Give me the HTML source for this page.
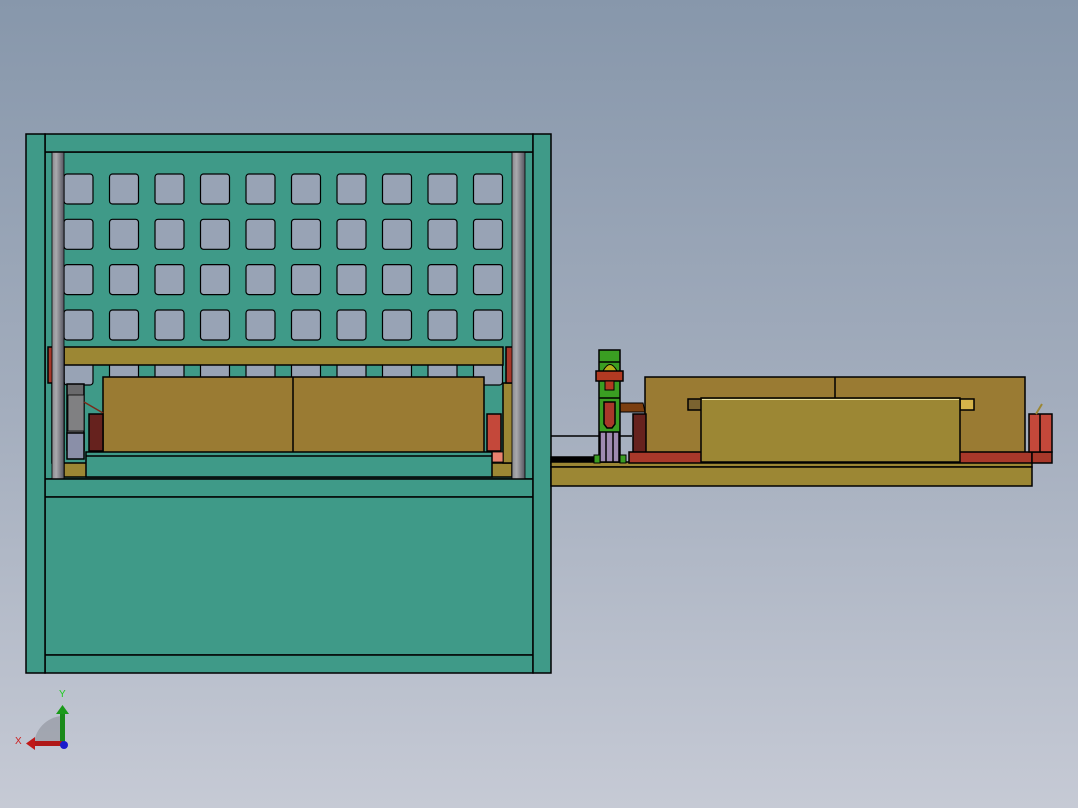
<!DOCTYPE html>
<html><head><style>html,body{margin:0;padding:0;}body{width:1078px;height:808px;overflow:hidden;}</style></head>
<body>
<svg width="1078" height="808" viewBox="0 0 1078 808" xmlns="http://www.w3.org/2000/svg" style="display:block">
<defs>
<linearGradient id="bg" x1="0" y1="0" x2="0" y2="1">
<stop offset="0" stop-color="#8797ab"/><stop offset="0.5" stop-color="#a3adbd"/><stop offset="1" stop-color="#c6cad5"/>
</linearGradient>
<linearGradient id="rod" x1="0" y1="0" x2="1" y2="0">
<stop offset="0" stop-color="#8a8a8e"/><stop offset="0.35" stop-color="#a9a9ad"/><stop offset="1" stop-color="#555560"/>
</linearGradient>
</defs>
<rect width="1078" height="808" fill="url(#bg)"/>
<g stroke="#000" stroke-width="1.5">
<rect x="45" y="152" width="488" height="327" fill="#3f9a88"/>
<g fill="#98a3b5" stroke-width="1.2">
<g id="row">
<rect x="64" y="174" width="29" height="30" rx="3"/><rect x="109.5" y="174" width="29" height="30" rx="3"/>
<rect x="155" y="174" width="29" height="30" rx="3"/><rect x="200.5" y="174" width="29" height="30" rx="3"/>
<rect x="246" y="174" width="29" height="30" rx="3"/><rect x="291.5" y="174" width="29" height="30" rx="3"/>
<rect x="337" y="174" width="29" height="30" rx="3"/><rect x="382.5" y="174" width="29" height="30" rx="3"/>
<rect x="428" y="174" width="29" height="30" rx="3"/><rect x="473.5" y="174" width="29" height="30" rx="3"/>
</g>
<use href="#row" y="45.3"/><use href="#row" y="90.6"/><use href="#row" y="136"/><use href="#row" y="181"/>
</g>
<rect x="64" y="463" width="448" height="14" fill="#9c8734"/>
<rect x="52" y="383" width="12" height="80" fill="#9c8734"/>
<rect x="503" y="383" width="10" height="80" fill="#9c8734"/>
<rect x="64" y="347" width="439" height="18" fill="#9c8734"/>
<rect x="48" y="347" width="16" height="36" fill="#a8382a"/>
<rect x="506" y="347" width="16" height="36" fill="#a8382a"/>
<rect x="103" y="377" width="381" height="76" fill="#9a7b33"/>
<line x1="293" y1="377" x2="293" y2="453"/>
<rect x="67" y="384" width="17" height="66" fill="#6a6a6c"/>
<rect x="68" y="395" width="16" height="36" fill="#808082" stroke-width="0.8"/>
<rect x="67" y="433" width="17" height="26" fill="#8a8fa8"/>
<line x1="84" y1="402" x2="103" y2="413" stroke="#7a2a1a" stroke-width="1.5"/>
<rect x="89" y="414" width="14" height="37" fill="#66221e"/>
<rect x="487" y="414" width="14" height="37" fill="#c4483a"/>
<rect x="492" y="452" width="11" height="10" fill="#e9826f" stroke-width="0.8"/>
<rect x="86" y="452" width="406" height="25" fill="#3f9a88"/>
<line x1="86" y1="456" x2="492" y2="456"/>
<rect x="52" y="152" width="12" height="327" fill="url(#rod)" stroke-width="0.8"/>
<rect x="512" y="152" width="13" height="327" fill="url(#rod)" stroke-width="0.8"/>
<rect x="45" y="134" width="488" height="18" fill="#3f9a88"/>
<rect x="45" y="479" width="488" height="18" fill="#3f9a88"/>
<rect x="45" y="497" width="488" height="158" fill="#3f9a88"/>
<rect x="45" y="655" width="488" height="18" fill="#3f9a88"/>
<rect x="26" y="134" width="19" height="539" fill="#3f9a88"/>
<rect x="533" y="134" width="18" height="539" fill="#3f9a88"/>
<line x1="551" y1="436" x2="632" y2="436"/>
<rect x="551" y="457" width="50" height="6" fill="#000"/>
<rect x="551" y="462" width="481" height="5" fill="#9c8734"/>
<rect x="551" y="467" width="481" height="19" fill="#9c8734"/>
<rect x="645" y="377" width="380" height="76" fill="#9a7b33"/>
<line x1="835" y1="377" x2="835" y2="400"/>
<rect x="633" y="414" width="13" height="39" fill="#66221e"/>
<path d="M620 403 H643 L645 412 H620 Z" fill="#7b3e10" stroke-width="1"/>
<rect x="629" y="452" width="403" height="11" fill="#a8382a"/>
<rect x="1032" y="452" width="20" height="11" fill="#a8382a"/>
<rect x="1029" y="414" width="23" height="38" fill="#c4483a"/>
<line x1="1040" y1="414" x2="1040" y2="452"/>
<line x1="1036" y1="414" x2="1042" y2="404" stroke="#9c8734" stroke-width="2"/>
<rect x="688" y="399" width="14" height="11" fill="#7a6330"/>
<rect x="960" y="399" width="14" height="11" fill="#d6b44a"/>
<rect x="701" y="398" width="259" height="64" fill="#9c8734"/>
<line x1="702" y1="399.5" x2="959" y2="399.5" stroke="#e8e0a0" stroke-width="1"/>
<rect x="599" y="350" width="21" height="112" fill="#3a9e22"/>
<line x1="599" y1="362" x2="620" y2="362"/>
<path d="M603 371 Q610 358 617 371 Z" fill="#b6b01a" stroke-width="1"/>
<rect x="596" y="371" width="27" height="10" fill="#b23a22"/>
<rect x="605" y="381" width="9" height="9" fill="#b23a22" stroke-width="1"/>
<line x1="599" y1="398" x2="620" y2="398"/>
<path d="M604 402 H615 V424 L612 428 H607 L604 424 Z" fill="#a8382a"/>
<rect x="600" y="432" width="19" height="30" fill="#9f8ab0"/>
<line x1="606" y1="432" x2="606" y2="462"/><line x1="613" y1="432" x2="613" y2="462"/>
<rect x="594" y="455" width="6" height="8" fill="#3a9e22" stroke-width="1"/>
<rect x="620" y="455" width="6" height="8" fill="#3a9e22" stroke-width="1"/>
</g>
<path d="M34 745 A30 30 0 0 1 62 716 L62 745 Z" fill="#9a9ea8" opacity="0.8"/>
<rect x="60" y="712" width="5" height="33" fill="#1a8a1a"/>
<path d="M56 714 L62.5 705 L69 714 Z" fill="#1a9a1a"/>
<rect x="34" y="741" width="28" height="5" fill="#b01818"/>
<path d="M35 737 L26 743.5 L35 750 Z" fill="#c01818"/>
<circle cx="64" cy="745" r="4" fill="#1a1acc"/>
<text x="59" y="697" font-family="Liberation Sans, sans-serif" font-size="10" fill="#20cc20">Y</text>
<text x="15" y="744" font-family="Liberation Sans, sans-serif" font-size="10" fill="#cc2020">X</text>
</svg>
</body></html>
